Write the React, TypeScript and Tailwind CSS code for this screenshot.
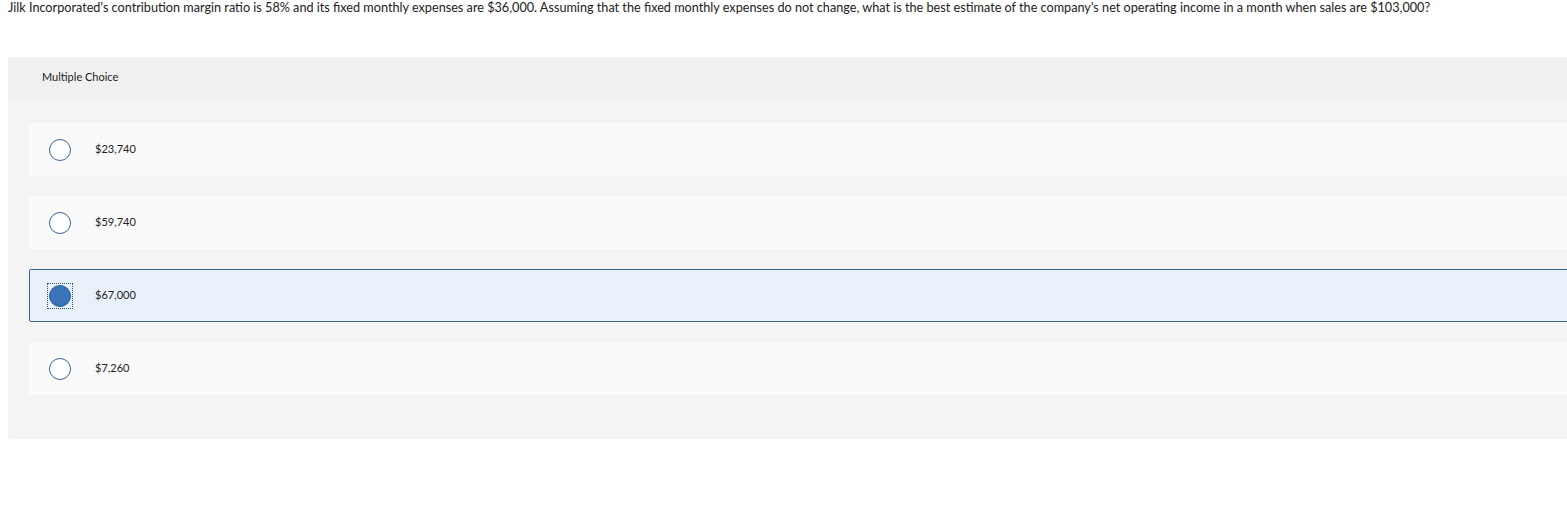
const options = [
  { label: "$23,740", selected: false },
  { label: "$59,740", selected: false },
  { label: "$67,000", selected: true },
  { label: "$7,260", selected: false },
];

function Radio({ selected }: { selected: boolean }) {
  if (selected) {
    return (
      <span className="flex h-[24px] w-[24px] items-center justify-center outline-1 outline-dotted outline-[#2b4f7a]">
        <span className="block h-[22px] w-[22px] rounded-full border border-[#2f5f96] bg-[#3a74b8]" />
      </span>
    );
  }
  return (
    <span className="flex h-[24px] w-[24px] items-center justify-center">
      <span className="block h-[22px] w-[22px] rounded-full border-[1.5px] border-[#3c6596] bg-white" />
    </span>
  );
}

export default function App() {
  return (
    <div className="h-[509px] w-[1567px] overflow-hidden bg-white font-['Lato','Open_Sans',sans-serif] text-[#222]">
      <p className="px-2 pt-[1px] text-[12.66px] leading-[14px] whitespace-nowrap">
        Jilk Incorporated's contribution margin ratio is 58% and its fixed monthly expenses are $36,000. Assuming that the fixed monthly expenses do not change, what is the best estimate of the company's net operating income in a month when sales are $103,000?
      </p>

      <div className="ml-2 mt-[42px] w-[1600px] rounded-bl bg-[#f4f4f4]">
        <div className="flex h-[40px] items-center bg-[#f0f0f0] pl-[34px] text-[11px]">Multiple Choice</div>
        <div className="flex flex-col gap-[20px] pt-[26px] pb-[44px] pl-[21px]">
          {options.map((o) => (
            <div
              key={o.label}
              className={
                o.selected
                  ? "flex h-[53px] items-center gap-[23px] rounded-[2px] border border-[#3c6596] bg-[#e9f1fa] pl-[18px]"
                  : "flex h-[53px] items-center gap-[23px] rounded-[2px] border border-transparent bg-[#fafafa] pl-[18px]"
              }
            >
              <Radio selected={o.selected} />
              <span className="text-[11px]">{o.label}</span>
            </div>
          ))}
        </div>
      </div>
    </div>
  );
}
